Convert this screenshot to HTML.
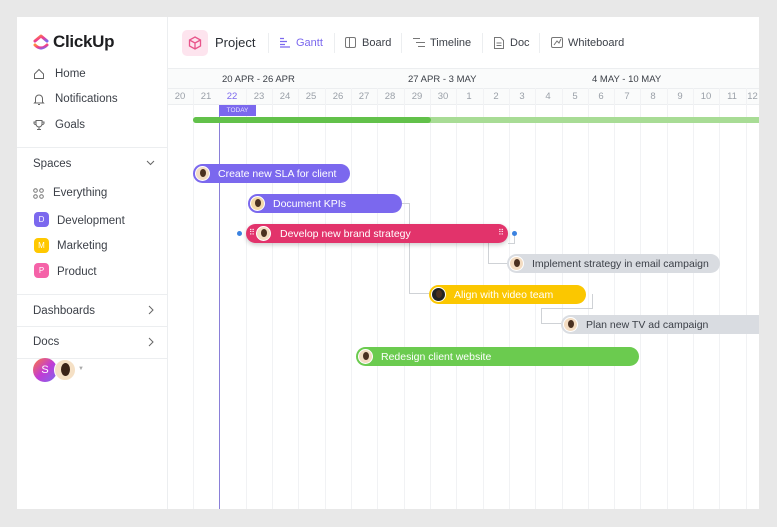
<!DOCTYPE html>
<html><head><meta charset="utf-8"><style>
*{margin:0;padding:0;box-sizing:border-box}
body{width:777px;height:527px;background:#e8e8e8;font-family:"Liberation Sans",sans-serif;position:relative;overflow:hidden;color:#2a2e34}
.a{position:absolute}
.card{left:17px;top:17px;width:742px;height:492px;background:#fff}
.nav{font-size:11.5px;color:#3c4048}
.hd{font-size:11px;color:#3c4048}
.day{position:absolute;top:91px;font-size:9.5px;color:#9aa0a8;width:26px;text-align:center}
.vl{position:absolute;top:88px;bottom:18px;width:1px;background:#f1f2f4}
.bar{position:absolute;height:19px;border-radius:10px;font-size:10.5px;color:#fff;display:flex;align-items:center;padding-left:25px;padding-top:1px;white-space:nowrap}
.av{position:absolute;left:2px;top:2px;width:15px;height:15px;border-radius:50%;background:#f3dcc2;border:1.5px solid #fff}
.av::after{content:"";position:absolute;left:4px;top:2px;width:6px;height:8px;border-radius:50%;background:#4a3020}
.ln{position:absolute;border:1px solid #cfd2d6;border-right:none;border-top:none}
.sq{position:absolute;left:34px;width:15px;height:15px;border-radius:4px;color:#fff;font-size:8px;text-align:center;line-height:15px}
.hr{position:absolute;left:17px;width:150px;height:1px;background:#eceef0}
</style></head><body>
<div class="a card"></div>
<div class="a" style="left:167px;top:17px;width:1px;height:492px;background:#eceef0"></div>
<svg class="a" style="left:33px;top:33px" width="16" height="18" viewBox="0 0 16 18"><defs><linearGradient id="g" x1="0" y1="0" x2="1" y2="1"><stop offset="0" stop-color="#ff8a3d"/><stop offset=".5" stop-color="#f23c8c"/><stop offset="1" stop-color="#7b68ee"/></linearGradient></defs><path d="M2 8 L8 3 L14 8" stroke="url(#g)" stroke-width="3" fill="none" stroke-linecap="round" stroke-linejoin="round"/><path d="M2 12 Q8 18 14 12" stroke="url(#g)" stroke-width="3" fill="none" stroke-linecap="round"/></svg>
<div class="a" style="left:53px;top:32px;font-size:17px;font-weight:bold;color:#1e1f21;letter-spacing:-0.3px">ClickUp</div>
<svg class="a" style="left:33px;top:68px" width="12" height="12" viewBox="0 0 12 12" fill="none" stroke="#666" stroke-width="1"><path d="M1.5 6 L6 1.5 L10.5 6 V10.5 H1.5Z"/></svg>
<div class="a nav" style="left:55px;top:68px">Home</div>
<svg class="a" style="left:33px;top:93px" width="12" height="13" viewBox="0 0 12 13" fill="none" stroke="#666" stroke-width="1"><path d="M2.5 9 V5.5 a3.5 3.5 0 0 1 7 0 V9 L10.5 10 H1.5Z M5 11.5 H7"/></svg>
<div class="a nav" style="left:55px;top:93px">Notifications</div>
<svg class="a" style="left:33px;top:119px" width="12" height="12" viewBox="0 0 12 12" fill="none" stroke="#666" stroke-width="1"><path d="M3 1.5 H9 V5 a3 3 0 0 1 -6 0Z M3 3 H1 V4.5 a2 2 0 0 0 2 1 M9 3 H11 V4.5 a2 2 0 0 1 -2 1 M6 8 V10.5 M4 10.5 H8"/></svg>
<div class="a nav" style="left:55px;top:119px">Goals</div>
<div class="hr" style="top:147px"></div>
<div class="a nav" style="left:33px;top:158px">Spaces</div>
<svg class="a" style="left:146px;top:160px" width="9" height="6"><path d="M1 1 L4.5 4.5 L8 1" stroke="#666" fill="none"/></svg>
<svg class="a" style="left:33px;top:188px" width="11" height="11" fill="none" stroke="#777"><circle cx="2.5" cy="2.5" r="1.8"/><circle cx="8.5" cy="2.5" r="1.8"/><circle cx="2.5" cy="8.5" r="1.8"/><circle cx="8.5" cy="8.5" r="1.8"/></svg>
<div class="a nav" style="left:53px;top:187px">Everything</div>
<div class="sq" style="top:212px;background:#7b68ee">D</div>
<div class="a nav" style="left:57px;top:215px">Development</div>
<div class="sq" style="top:238px;background:#ffc800">M</div>
<div class="a nav" style="left:57px;top:240px">Marketing</div>
<div class="sq" style="top:263px;background:#f562a8">P</div>
<div class="a nav" style="left:57px;top:266px">Product</div>
<div class="hr" style="top:294px"></div>
<div class="a nav" style="left:33px;top:305px">Dashboards</div>
<svg class="a" style="left:148px;top:305px" width="6" height="10"><path d="M1 1 L5 5 L1 9" stroke="#666" fill="none"/></svg>
<div class="hr" style="top:326px"></div>
<div class="a nav" style="left:33px;top:336px">Docs</div>
<svg class="a" style="left:148px;top:337px" width="6" height="10"><path d="M1 1 L5 5 L1 9" stroke="#666" fill="none"/></svg>
<div class="hr" style="top:358px"></div>
<div class="a" style="left:33px;top:358px;width:24px;height:24px;border-radius:50%;background:linear-gradient(135deg,#ff7a3d,#c23bd4,#7b68ee);color:#fff;font-size:11px;text-align:center;line-height:24px">S</div>
<div class="a" style="left:54px;top:359px;width:22px;height:22px;border-radius:50%;background:#f5e0c5;border:1px solid #fff"><div class="a" style="left:6px;top:3px;width:9px;height:13px;border-radius:50%;background:#3a2418"></div></div>
<div class="a" style="left:78px;top:366px;font-size:6px;color:#aaa">▼</div>
<div class="a" style="left:182px;top:30px;width:26px;height:26px;border-radius:5px;background:#fde4ee"></div>
<svg class="a" style="left:188px;top:36px" width="14" height="14" viewBox="0 0 14 14" fill="none" stroke="#e8548a" stroke-width="1.3"><path d="M7 1 L12.5 4 V10 L7 13 L1.5 10 V4Z M1.5 4 L7 7 L12.5 4 M7 7 V13"/></svg>
<div class="a" style="left:215px;top:35px;font-size:13px;color:#2a2e34">Project</div>
<div class="a" style="left:268px;top:33px;width:1px;height:20px;background:#eceef0"></div>
<svg class="a" style="left:279px;top:37px" width="12" height="11" stroke="#7b68ee" stroke-width="1.2"><path d="M1 1.5H5 M1 4.5H8 M1 7.5H6 M1 10H11"/></svg>
<div class="a hd" style="left:296px;top:37px;color:#7b68ee">Gantt</div>
<div class="a" style="left:334px;top:33px;width:1px;height:20px;background:#eceef0"></div>
<svg class="a" style="left:345px;top:37px" width="11" height="11" fill="none" stroke="#777"><rect x="0.5" y="0.5" width="10" height="10" rx="1.5"/><path d="M4.5 0.5V10.5"/></svg>
<div class="a hd" style="left:362px;top:37px">Board</div>
<div class="a" style="left:401px;top:33px;width:1px;height:20px;background:#eceef0"></div>
<svg class="a" style="left:412px;top:37px" width="14" height="11" stroke="#777"><path d="M1 1.5H8 M4 5.5H13 M6 9.5H13"/></svg>
<div class="a hd" style="left:430px;top:37px">Timeline</div>
<div class="a" style="left:482px;top:33px;width:1px;height:20px;background:#eceef0"></div>
<svg class="a" style="left:494px;top:37px" width="10" height="12" fill="none" stroke="#777"><path d="M0.5 0.5H6.5L9.5 3.5V11.5H0.5Z M2.5 6H7.5 M2.5 8.5H7.5"/></svg>
<div class="a hd" style="left:510px;top:37px">Doc</div>
<div class="a" style="left:539px;top:33px;width:1px;height:20px;background:#eceef0"></div>
<svg class="a" style="left:551px;top:37px" width="12" height="11" fill="none" stroke="#777"><rect x="0.5" y="0.5" width="11" height="10" rx="1.5"/><path d="M3 8 L6 4 L8 6 L10 2"/></svg>
<div class="a hd" style="left:568px;top:37px">Whiteboard</div>
<div class="a" style="left:168px;top:68px;width:591px;height:37px;background:#fafbfb;border-top:1px solid #eceef0;border-bottom:1px solid #eceef0"></div>
<div class="a" style="left:168px;top:88px;width:591px;height:1px;background:#eceef0"></div>
<div class="a" style="left:222px;top:74px;font-size:9.5px;color:#3c4048">20 APR - 26 APR</div>
<div class="a" style="left:408px;top:74px;font-size:9.5px;color:#3c4048">27 APR - 3 MAY</div>
<div class="a" style="left:592px;top:74px;font-size:9.5px;color:#3c4048">4 MAY - 10 MAY</div>
<div class="vl" style="left:193px"></div><div class="vl" style="left:246px"></div><div class="vl" style="left:272px"></div><div class="vl" style="left:298px"></div><div class="vl" style="left:325px"></div><div class="vl" style="left:351px"></div><div class="vl" style="left:377px"></div><div class="vl" style="left:404px"></div><div class="vl" style="left:430px"></div><div class="vl" style="left:456px"></div><div class="vl" style="left:483px"></div><div class="vl" style="left:509px"></div><div class="vl" style="left:535px"></div><div class="vl" style="left:562px"></div><div class="vl" style="left:588px"></div><div class="vl" style="left:614px"></div><div class="vl" style="left:640px"></div><div class="vl" style="left:667px"></div><div class="vl" style="left:693px"></div><div class="vl" style="left:719px"></div><div class="vl" style="left:746px"></div>
<div class="day" style="left:167px">20</div><div class="day" style="left:193px">21</div><div class="day" style="left:219px;color:#7b68ee">22</div><div class="day" style="left:246px">23</div><div class="day" style="left:272px">24</div><div class="day" style="left:298px">25</div><div class="day" style="left:325px">26</div><div class="day" style="left:351px">27</div><div class="day" style="left:377px">28</div><div class="day" style="left:404px">29</div><div class="day" style="left:430px">30</div><div class="day" style="left:456px">1</div><div class="day" style="left:483px">2</div><div class="day" style="left:509px">3</div><div class="day" style="left:535px">4</div><div class="day" style="left:562px">5</div><div class="day" style="left:588px">6</div><div class="day" style="left:614px">7</div><div class="day" style="left:640px">8</div><div class="day" style="left:667px">9</div><div class="day" style="left:693px">10</div><div class="day" style="left:719px">11</div><div class="day" style="left:746px;width:13px;overflow:hidden">12</div>
<div class="a" style="left:219px;top:105px;width:1px;height:404px;background:#8a7fd8"></div>
<div class="a" style="left:219px;top:105px;width:37px;height:11px;background:#7b68ee;color:#e8e4ff;font-size:6.5px;text-align:center;line-height:11px">TODAY</div>
<div class="a" style="left:193px;top:117px;width:566px;height:6px;border-radius:3px 0 0 3px;background:#a8dc95"></div>
<div class="a" style="left:193px;top:117px;width:238px;height:6px;border-radius:3px;background:#62c14a"></div>
<div class="ln" style="left:402px;top:203px;width:8px;height:1px;border:none;border-top:1px solid #cfd2d6"></div>
<div class="ln" style="left:409px;top:203px;width:20px;height:91px;border-left:1px solid #cfd2d6;border-bottom:1px solid #cfd2d6"></div>
<div class="ln" style="left:488px;top:243px;width:20px;height:21px"></div>
<div class="ln" style="left:508px;top:234px;width:7px;height:10px;border:none;border-right:1px solid #cfd2d6;border-bottom:1px solid #cfd2d6"></div>
<div class="ln" style="left:541px;top:308px;width:20px;height:16px"></div>
<div class="ln" style="left:541px;top:294px;width:52px;height:15px;border:none;border-right:1px solid #cfd2d6;border-bottom:1px solid #cfd2d6"></div>
<div class="bar" style="left:193px;top:164px;width:157px;background:#7b68ee"><div class="av"></div>Create new SLA for client</div>
<div class="bar" style="left:248px;top:194px;width:154px;background:#7b68ee"><div class="av" style="background:#f3d8a8"></div>Document KPIs</div>
<div class="a" style="left:237px;top:231px;width:5px;height:5px;border-radius:50%;background:#3b82e0"></div>
<div class="a" style="left:512px;top:231px;width:5px;height:5px;border-radius:50%;background:#3b82e0"></div>
<div class="bar" style="left:246px;top:224px;width:262px;background:#e2336b;padding-left:34px;box-shadow:0 2px 5px rgba(0,0,0,.2)"><div class="av" style="left:10px"></div>Develop new brand strategy<span style="position:absolute;left:3px;top:4px;font-size:8px">⠿</span><span style="position:absolute;right:4px;top:4px;font-size:8px">⠿</span></div>
<div class="bar" style="left:507px;top:254px;width:213px;background:#d9dce1;color:#3c4048"><div class="av"></div>Implement strategy in email campaign</div>
<div class="bar" style="left:429px;top:285px;width:157px;background:#fbc700"><div class="av" style="background:#222"></div>Align with video team</div>
<div class="bar" style="left:561px;top:315px;width:198px;background:#d9dce1;color:#3c4048;border-radius:10px 0 0 10px"><div class="av"></div>Plan new TV ad campaign</div>
<div class="bar" style="left:356px;top:347px;width:283px;background:#6bcb4f"><div class="av"></div>Redesign client website</div>
</body></html>
